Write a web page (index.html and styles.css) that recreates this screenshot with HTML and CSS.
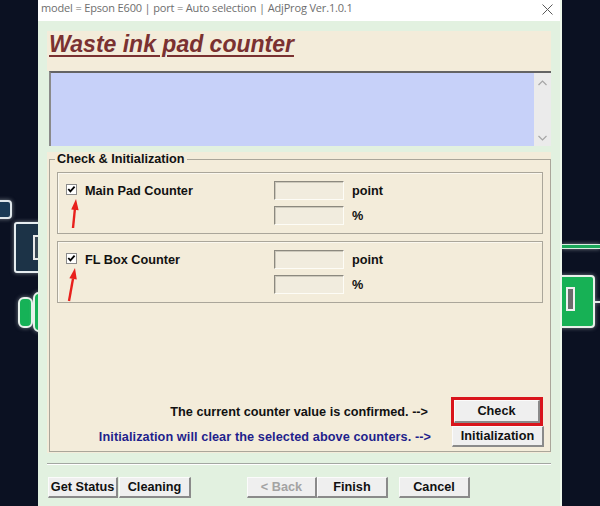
FILE: index.html
```html
<!DOCTYPE html>
<html lang="en">
<head>
    <meta charset="UTF-8">
    <title>Waste ink pad counter</title>
    <link rel="stylesheet" href="styles.css">
</head>
<body>
    <div class="desktop">
        <div class="side side-left">
            <div class="deco deco-tab"></div>
            <div class="deco deco-panel"><div class="deco-glyph"></div></div>
            <div class="deco deco-pill"></div>
            <div class="deco deco-pill-edge"></div>
        </div>

        <div class="window">
            <div class="titlebar">
                <span class="title-text">model = Epson E600 | port = Auto selection | AdjProg Ver.1.0.1</span>
                <svg class="close" width="11" height="11" viewBox="0 0 11 11">
                    <path d="M0.5 0.5 L10.5 10.5 M10.5 0.5 L0.5 10.5" stroke="#5a5a5a" stroke-width="1" fill="none"/>
                </svg>
            </div>

            <div class="client">
                <div class="header">
                    <h1>Waste ink pad counter</h1>
                </div>

                <div class="memo">
                    <div class="memo-area"></div>
                    <div class="scrollbar">
                        <svg width="9" height="6" viewBox="0 0 9 6"><path d="M0.5 5 L4.5 1 L8.5 5" stroke="#a6a6a6" stroke-width="1.2" fill="none"/></svg>
                        <svg width="9" height="6" viewBox="0 0 9 6"><path d="M0.5 1 L4.5 5 L8.5 1" stroke="#a6a6a6" stroke-width="1.2" fill="none"/></svg>
                    </div>
                </div>

                <div class="work">
                    <fieldset class="group">
                        <legend>Check &amp; Initialization</legend>

                        <div class="counter-box">
                            <label class="check-label">
                                <svg class="check" width="11" height="11" viewBox="0 0 11 11">
                                    <rect x="0.5" y="0.5" width="10" height="10" fill="#fff" stroke="#8a8a8a"/>
                                    <path d="M2.3 5 L4.4 7.4 L8.6 2.6" stroke="#000" stroke-width="1.8" fill="none"/>
                                </svg>
                                Main Pad Counter
                            </label>
                            <div class="field"></div>
                            <span class="unit">point</span>
                            <span></span>
                            <div class="field"></div>
                            <span class="unit">%</span>
                            <svg class="arrow" width="20" height="40" viewBox="0 0 20 40">
                                <path d="M10 33 L11.9 14" stroke="#e8201c" stroke-width="2.4" fill="none"/>
                                <polygon points="13,4 15.6,15.3 8.2,14.6" fill="#e8201c"/>
                            </svg>
                        </div>

                        <div class="counter-box">
                            <label class="check-label">
                                <svg class="check" width="11" height="11" viewBox="0 0 11 11">
                                    <rect x="0.5" y="0.5" width="10" height="10" fill="#fff" stroke="#8a8a8a"/>
                                    <path d="M2.3 5 L4.4 7.4 L8.6 2.6" stroke="#000" stroke-width="1.8" fill="none"/>
                                </svg>
                                FL Box Counter
                            </label>
                            <div class="field"></div>
                            <span class="unit">point</span>
                            <span></span>
                            <div class="field"></div>
                            <span class="unit">%</span>
                            <svg class="arrow" width="20" height="40" viewBox="0 0 20 40">
                                <path d="M6 37 L10 14.8" stroke="#e8201c" stroke-width="2.4" fill="none"/>
                                <polygon points="12,4 13.8,15.5 6.4,14.2" fill="#e8201c"/>
                            </svg>
                        </div>

                        <div class="actions">
                            <span class="note">The current counter value is confirmed. --&gt;</span>
                            <div class="highlight"><button class="btn btn-check">Check</button></div>
                            <span class="note note-blue">Initialization will clear the selected above counters. --&gt;</span>
                            <button class="btn btn-init">Initialization</button>
                        </div>
                    </fieldset>
                </div>

                <div class="separator"></div>

                <div class="footer">
                    <button class="btn btn-status">Get Status</button>
                    <button class="btn btn-clean">Cleaning</button>
                    <button class="btn btn-back" disabled>&lt; Back</button>
                    <button class="btn btn-finish">Finish</button>
                    <button class="btn btn-cancel">Cancel</button>
                </div>
            </div>
        </div>

        <div class="side side-right">
            <div class="deco deco-rail"></div>
            <div class="deco deco-block"><div class="deco-slot"></div></div>
            <div class="deco deco-wire"></div>
        </div>
    </div>
</body>
</html>
```

FILE: styles.css
```css
/* General styles */
* {
    box-sizing: border-box;
    margin: 0;
    padding: 0;
}

body {
    background: #0b1122;
    font-family: "Liberation Sans", Arial, sans-serif;
    font-size: 12.7px;
    color: #111;
}

.desktop {
    display: flex;
    height: 506px;
    overflow: hidden;
}

/* Background desktop pieces */
.side {
    position: relative;
    width: 38px;
    flex: none;
    overflow: hidden;
}

.deco {
    position: absolute;
    box-shadow: 0 0 4px rgba(230, 240, 240, 0.5);
}

.deco-tab {
    left: -4px;
    top: 200px;
    width: 16px;
    height: 19px;
    background: #1a3a55;
    border: 2px solid #dfe7ea;
    border-radius: 0 4px 4px 0;
}

.deco-panel {
    left: 14px;
    top: 222px;
    width: 40px;
    height: 51px;
    background: #1c3347;
    border: 2px solid #e6edf0;
    border-radius: 3px;
}

.deco-glyph {
    position: absolute;
    left: 17px;
    top: 11px;
    width: 8px;
    height: 25px;
    border: 2px solid #e8e8e8;
    background: #3b4a56;
}

.deco-pill {
    left: 18px;
    top: 297px;
    width: 15px;
    height: 31px;
    background: #16b257;
    border: 2px solid #e9f2ec;
    border-radius: 6px;
}

.deco-pill-edge {
    left: 33px;
    top: 292px;
    width: 14px;
    height: 40px;
    background: #16b257;
    border: 2px solid #e9f2ec;
    border-radius: 6px;
}

.deco-rail {
    left: 0;
    top: 244px;
    width: 38px;
    height: 5px;
    background: #1aa85a;
    border-top: 1px solid #d8ece0;
    border-bottom: 1px solid #d8ece0;
}

.deco-block {
    left: -4px;
    top: 275px;
    width: 37px;
    height: 53px;
    background: #17b155;
    border: 2px solid #e8f0ea;
    border-radius: 4px;
}

.deco-slot {
    position: absolute;
    left: 6px;
    top: 10px;
    width: 9px;
    height: 24px;
    border: 2px solid #f0f0f0;
    background: #6b6b6b;
}

.deco-wire {
    left: 33px;
    top: 301px;
    width: 8px;
    height: 2px;
    background: #e2ebe6;
}

/* Window */
.window {
    width: 524px;
    flex: none;
    display: flex;
    flex-direction: column;
    background: #e2f1e0;
    border-right: 2px solid #eef8ec;
}

.titlebar {
    height: 21px;
    background: #fff;
    display: flex;
    justify-content: space-between;
    align-items: flex-start;
    padding: 0 7px 0 3px;
}

.title-text {
    font-family: "Open Sans", "Noto Sans", sans-serif;
    font-size: 11px;
    letter-spacing: -0.16px;
    line-height: 16px;
    color: #6e6e6e;
}

.close {
    margin-top: 4px;
}

.client {
    padding: 10px 9px 0 9px;
}

.header {
    height: 40px;
    background: #f3ecda;
    padding-left: 2px;
}

.header h1 {
    display: inline-block;
    font-family: "Liberation Sans", Arial, sans-serif;
    font-style: italic;
    font-weight: bold;
    font-size: 23px;
    line-height: 26px;
    color: #7a3131;
    text-decoration: underline;
    text-decoration-thickness: 2px;
    text-underline-offset: 3px;
}

.memo {
    display: flex;
    height: 75px;
    margin-left: 2px;
    background: #c7d1f9;
    border-top: 2px solid #646464;
    border-left: 2px solid #8a8a8a;
}

.memo-area {
    flex: 1;
}

.scrollbar {
    width: 17px;
    background: #ebebeb;
    display: flex;
    flex-direction: column;
    justify-content: space-between;
    align-items: center;
    padding: 7px 0 5px;
}

.work {
    background: #f3ecda;
    padding: 0 0 1px 2px;
}

.group {
    margin-top: 6px;
    border: 1px solid #aaa69a;
    padding: 5px 7px 4px 7px;
}

.group legend {
    margin-left: -2px;
    padding: 0 2px;
    font-weight: bold;
    font-size: 12.7px;
    line-height: 15px;
}

.counter-box {
    position: relative;
    display: grid;
    grid-template-columns: 200px 70px auto;
    column-gap: 8px;
    row-gap: 6px;
    align-items: center;
    padding: 8px 8px 8px 8px;
    border: 1px solid #aaa69a;
    box-shadow: inset 1px 1px 0 #fbf8ef;
}

.counter-box + .counter-box {
    margin-top: 7px;
}

.check-label {
    display: flex;
    align-items: center;
    gap: 8px;
    font-weight: bold;
}

.check {
    margin-top: -3px;
}

.field {
    height: 19px;
    background: #f1ecde;
    border: 1px solid;
    border-color: #8c897f #fdfcf6 #fdfcf6 #8c897f;
    box-shadow: inset 1px 1px 0 #cdc9bc;
}

.unit {
    font-weight: bold;
}

.arrow {
    position: absolute;
    left: 5px;
    top: 22px;
}

.actions {
    display: grid;
    grid-template-columns: 1fr 92px;
    column-gap: 23px;
    align-items: center;
    margin-top: 94px;
}

.note {
    text-align: right;
    font-weight: bold;
}

.note-blue {
    color: #1f1f8c;
    letter-spacing: 0.08px;
    margin-right: -3px;
}

.highlight {
    height: 29px;
    border: 3px solid #d9141b;
}

/* Buttons */
.btn {
    font-family: "Liberation Sans", Arial, sans-serif;
    font-size: 12.7px;
    font-weight: bold;
    color: #111;
    background: #efefef;
    border-style: solid;
    border-width: 1px 2px 2px 1px;
    border-color: #fbfbfb #8a8a8a #8a8a8a #fbfbfb;
    height: 21px;
    line-height: 17px;
    cursor: pointer;
}

.btn-check {
    width: 100%;
    height: 100%;
}

.btn-init {
    width: 92px;
    margin-left: 1px;
}

.separator {
    margin-top: 10px;
    border-top: 1px solid #a3a7a2;
    border-bottom: 1px solid #fff;
}

.footer {
    display: flex;
    padding: 12px 0 0 1px;
}

.btn-status {
    width: 70px;
}

.btn-clean {
    width: 72px;
    margin-left: 1px;
}

.btn-back {
    width: 70px;
    margin-left: 56px;
    color: #a3a3a3;
    cursor: default;
}

.btn-finish {
    width: 71px;
}

.btn-cancel {
    width: 71px;
    margin-left: 11px;
}
```
